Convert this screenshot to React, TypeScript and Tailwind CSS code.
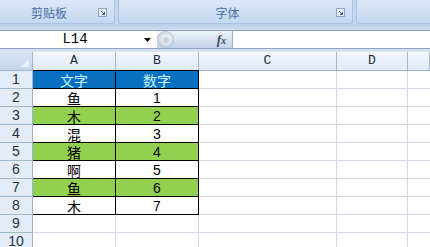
import React from "react"

const rows = [
  { n: 1, a: "文字", b: "数字", kind: "head" },
  { n: 2, a: "鱼", b: "1", kind: "white" },
  { n: 3, a: "木", b: "2", kind: "green" },
  { n: 4, a: "混", b: "3", kind: "white" },
  { n: 5, a: "猪", b: "4", kind: "green" },
  { n: 6, a: "啊", b: "5", kind: "white" },
  { n: 7, a: "鱼", b: "6", kind: "green" },
  { n: 8, a: "木", b: "7", kind: "white" },
  { n: 9, a: "", b: "", kind: "none" },
  { n: 10, a: "", b: "", kind: "none" },
]

function Launcher() {
  return (
    <svg width="9" height="9" viewBox="0 0 9 9">
      <rect x="0.5" y="0.5" width="8" height="8" fill="#e8eef8" stroke="#8ea6c8" />
      <path d="M3 3 L6.5 6.5 M6.5 4 V6.5 H4" stroke="#3d5f93" strokeWidth="1" fill="none" />
    </svg>
  )
}

function RibbonGroup({ label, className }: { label?: string; className: string }) {
  return (
    <div
      className={`h-[24px] flex items-center rounded-b-[3px] border-x border-b border-[#a9c1e2] bg-gradient-to-b from-[#dbe7f7] to-[#c4d8f1] ${className}`}
    >
      {label && (
        <>
          <span className="flex-1 text-center text-[12px] text-[#4a6ea6] pt-[2px]">{label}</span>
          <span className="mr-[7px] mt-[1px]">
            <Launcher />
          </span>
        </>
      )}
    </div>
  )
}

export default function App() {
  const cellFont = { fontFamily: '"Noto Sans CJK SC", "Liberation Sans", sans-serif' }
  return (
    <div className="w-[430px] h-[247px] overflow-hidden bg-[#c5d7ee] flex flex-col" style={cellFont}>
      {/* Ribbon */}
      <div className="flex shrink-0 h-[24px] gap-[3px]">
        <RibbonGroup label="剪贴板" className="w-[116px] -ml-[1px]" />
        <RibbonGroup label="字体" className="w-[235px]" />
        <RibbonGroup className="flex-1 -mr-[2px]" />
      </div>
      <div className="h-[6px] shrink-0 bg-gradient-to-b from-[#b9cfea] to-[#cfdcee]" />

      {/* Formula bar */}
      <div className="h-[19px] shrink-0 flex border-y border-[#8ba2c0] bg-white">
        <div
          className="w-[157px] flex items-center bg-white"
          style={{ fontFamily: '"Liberation Mono", "DejaVu Sans Mono", monospace' }}
        >
          <span className="flex-1 text-center text-[14px] text-black pl-[6px]">L14</span>
          <svg width="7" height="4" viewBox="0 0 7 4" className="mr-[6px]">
            <path d="M0 0 H7 L3.5 4 Z" fill="#111" />
          </svg>
        </div>
        <div className="w-[76px] flex items-center bg-gradient-to-b from-[#eef3fa] via-[#d9e3f1] to-[#c3d2e7] border-r border-[#9fb2cc]">
          <div className="w-[17px] h-[17px] rounded-full border border-[#b5c2d3] bg-[radial-gradient(circle_at_55%_45%,#fdfdfd,#d3dbe6_60%,#aeb9c8)] flex items-center justify-center">
            <div className="w-[6px] h-[6px] rounded-full bg-[#c9d1dc]" />
          </div>
          <span
            className="ml-auto mr-[6px] text-[13px] italic font-bold text-[#384a63]"
            style={{ fontFamily: '"Liberation Serif", serif' }}
          >
            f<span className="text-[10px]">x</span>
          </span>
        </div>
        <div className="flex-1 bg-white" />
      </div>
      <div className="h-[3px] shrink-0 bg-[#d5e1f0]" />

      {/* Sheet grid */}
      <div className="shrink-0 bg-white grid grid-cols-[33px_83px_83px_138px_71px_1fr] grid-rows-[19px_repeat(10,18px)]">
        {/* corner */}
        <div className="border-r border-b border-[#9eb6ce] bg-gradient-to-b from-[#d7e3f4] to-[#c4d6ee] relative">
          <svg width="8" height="8" viewBox="0 0 8 8" className="absolute right-[3px] bottom-[3px]">
            <path d="M8 0 V8 H0 Z" fill="#e9f0fa" />
          </svg>
        </div>
        {["A", "B", "C", "D", ""].map((c, i) => (
          <div
            key={i}
            className="flex items-center justify-center border-r border-b border-[#9eb6ce] bg-gradient-to-b from-[#f4f7fc] to-[#dfe8f5] text-[13px] text-[#1b2a40]"
            style={{ fontFamily: '"Liberation Mono", monospace' }}
          >
            {c}
          </div>
        ))}

        {rows.map((r) => {
          const fill =
            r.kind === "head"
              ? "bg-[#0870c1] text-[#cdf6ff]"
              : r.kind === "green"
                ? "bg-[#92d050] text-black"
                : "bg-white text-black"
          const inTable = r.kind !== "none"
          const bottom = inTable ? "border-b border-black" : "border-b border-[#d0d7e5]"
          const top = r.n === 1 ? "border-t border-black -mt-px" : ""
          return (
            <React.Fragment key={r.n}>
              <div className="flex items-center justify-center border-r border-b border-[#9eb6ce] bg-[#e4ecf7] text-[14px] text-[#22334d]" style={{ fontFamily: '"Liberation Sans", sans-serif' }}>
                {r.n}
              </div>
              <div className={`flex items-center justify-center overflow-hidden text-[14px] leading-[16px] ${inTable ? "border-r border-black" : "border-r border-[#d0d7e5]"} ${bottom} ${top} ${inTable ? fill : ""}`}>
                {r.a}
              </div>
              <div
                className={`flex items-center justify-center overflow-hidden text-[14px] leading-[16px] ${inTable ? "border-r border-black" : "border-r border-[#d0d7e5]"} ${bottom} ${top} ${inTable ? fill : ""}`}
                style={r.kind === "head" ? undefined : { fontFamily: '"Liberation Sans", sans-serif' }}
              >
                {r.b}
              </div>
              <div className="border-r border-b border-[#d0d7e5]" />
              <div className="border-r border-b border-[#d0d7e5]" />
              <div className="border-b border-[#d0d7e5]" />
            </React.Fragment>
          )
        })}
      </div>
    </div>
  )
}
